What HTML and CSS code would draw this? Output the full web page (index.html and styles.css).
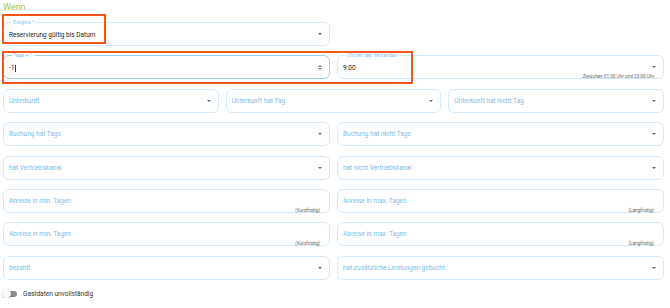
FILE: index.html
```html
<!DOCTYPE html>
<html lang="de">
<head>
    <meta charset="UTF-8">
    <title>Wenn</title>
    <link rel="stylesheet" href="styles.css">
</head>
<body>
    <!-- Bedingungen -->
    <section class="rule">
        <h2 class="rule-title">Wenn</h2>

        <div class="rows">
            <!-- Ereignis -->
            <div class="row cols-2">
                <div class="field filled">
                    <span class="field-label">Ereignis *</span>
                    <span class="field-value">Reservierung gültig bis Datum</span>
                    <span class="arrow"></span>
                </div>
            </div>

            <!-- Tage / Uhrzeit -->
            <div class="row cols-2">
                <div class="field filled focused">
                    <span class="field-label">Tage + / -</span>
                    <span class="field-value">-1<span class="caret"></span></span>
                    <span class="spinner">
                        <span class="spin-up"></span>
                        <span class="spin-down"></span>
                    </span>
                </div>
                <div class="field filled">
                    <span class="field-label">Uhrzeit des Versandes</span>
                    <span class="field-value">9:00</span>
                    <span class="arrow"></span>
                    <span class="hint">Zwischen 01:00 Uhr und 23:00 Uhr</span>
                </div>
            </div>

            <div class="row cols-3">
                <div class="field"><span class="placeholder">Unterkunft</span><span class="arrow"></span></div>
                <div class="field"><span class="placeholder">Unterkunft hat Tag</span><span class="arrow"></span></div>
                <div class="field"><span class="placeholder">Unterkunft hat nicht Tag</span><span class="arrow"></span></div>
            </div>

            <div class="row cols-2">
                <div class="field"><span class="placeholder">Buchung hat Tags</span><span class="arrow"></span></div>
                <div class="field"><span class="placeholder">Buchung hat nicht Tags</span><span class="arrow"></span></div>
            </div>

            <div class="row cols-2">
                <div class="field"><span class="placeholder">hat Vertriebskanal</span><span class="arrow"></span></div>
                <div class="field"><span class="placeholder">hat nicht Vertriebskanal</span><span class="arrow"></span></div>
            </div>

            <div class="row cols-2">
                <div class="field"><span class="placeholder">Anreise in min. Tagen</span><span class="hint">(Kurzfristig)</span></div>
                <div class="field"><span class="placeholder">Anreise in max. Tagen</span><span class="hint">(Langfristig)</span></div>
            </div>

            <div class="row cols-2">
                <div class="field"><span class="placeholder">Abreise in min. Tagen</span><span class="hint">(Kurzfristig)</span></div>
                <div class="field"><span class="placeholder">Abreise in max. Tagen</span><span class="hint">(Langfristig)</span></div>
            </div>

            <div class="row cols-2">
                <div class="field"><span class="placeholder">bezahlt</span><span class="arrow"></span></div>
                <div class="field"><span class="placeholder">hat zusätzliche Leistungen gebucht</span><span class="arrow"></span></div>
            </div>
        </div>

        <!-- Schalter -->
        <label class="switch-row">
            <span class="switch"><span class="knob"></span></span>
            <span class="switch-text">Gastdaten unvollständig</span>
        </label>

        <!-- Markierungen -->
        <div class="mark mark-1"></div>
        <div class="mark mark-2"></div>
    </section>
</body>
</html>
```

FILE: styles.css
```css
* {
    margin: 0;
    padding: 0;
    box-sizing: border-box;
}

body {
    font-family: Roboto, "Liberation Sans", sans-serif;
    background-color: white;
    color: #222;
}

/* Bereich */
.rule {
    position: relative;
    padding: 2px 6px 0 3px;
}

.rule-title {
    font-size: 9px;
    font-weight: 400;
    color: #9cc43f;
    line-height: 11px;
    height: 20px;
}

.rows {
    display: flex;
    flex-direction: column;
    gap: 9.4px;
}

.row {
    display: grid;
    gap: 7px;
}

.cols-2 {
    grid-template-columns: 1fr 1fr;
}

.cols-3 {
    grid-template-columns: 1fr 1fr 1fr;
}

/* Eingabefeld */
.field {
    position: relative;
    height: 24px;
    border: 1px solid #d3e9f9;
    border-radius: 6px;
    display: flex;
    align-items: center;
    padding: 0 6px 0 5px;
    font-size: 6.5px;
}

.field.focused {
    border-color: #9fcdf0;
}

.placeholder {
    color: #7dbbe6;
    flex: 1;
}

.field-value {
    flex: 1;
    color: #222;
    padding-top: 1px;
}

.field-label {
    position: absolute;
    top: -3px;
    left: 8px;
    padding: 0 1px;
    background: white;
    font-size: 5px;
    line-height: 5px;
    color: #8cc2ea;
}

.caret {
    display: inline-block;
    width: 0.5px;
    height: 7px;
    background: #333;
    vertical-align: middle;
    margin-left: 0.5px;
}

/* Pfeil rechts */
.arrow {
    width: 0;
    height: 0;
    border-left: 2.5px solid transparent;
    border-right: 2.5px solid transparent;
    border-top: 2.5px solid #666;
    margin-right: 1px;
}

.spinner {
    display: flex;
    flex-direction: column;
    gap: 1px;
    margin-right: 1px;
}

.spin-up {
    border-left: 2px solid transparent;
    border-right: 2px solid transparent;
    border-bottom: 2.5px solid #777;
}

.spin-down {
    border-left: 2px solid transparent;
    border-right: 2px solid transparent;
    border-top: 2.5px solid #777;
}

.hint {
    position: absolute;
    right: 9px;
    bottom: -1px;
    font-size: 4.7px;
    color: #666;
}

/* Schalter */
.switch-row {
    display: flex;
    align-items: center;
    gap: 6px;
    margin-top: 10px;
    font-size: 6.5px;
    color: #333;
}

.switch {
    position: relative;
    width: 14px;
    height: 6px;
    border-radius: 3px;
    background: #8a8a8a;
}

.knob {
    position: absolute;
    left: -1px;
    top: -1.5px;
    width: 9px;
    height: 9px;
    border-radius: 50%;
    background: #fafafa;
    box-shadow: 0 0.5px 1.5px rgba(0,0,0,0.35);
}

/* Orange Markierungen */
.mark {
    position: absolute;
    border: 2px solid #f2561d;
}

.mark-1 {
    left: 2px;
    top: 14px;
    width: 104px;
    height: 30px;
}

.mark-2 {
    left: 2px;
    top: 51px;
    width: 411px;
    height: 33px;
}
```
